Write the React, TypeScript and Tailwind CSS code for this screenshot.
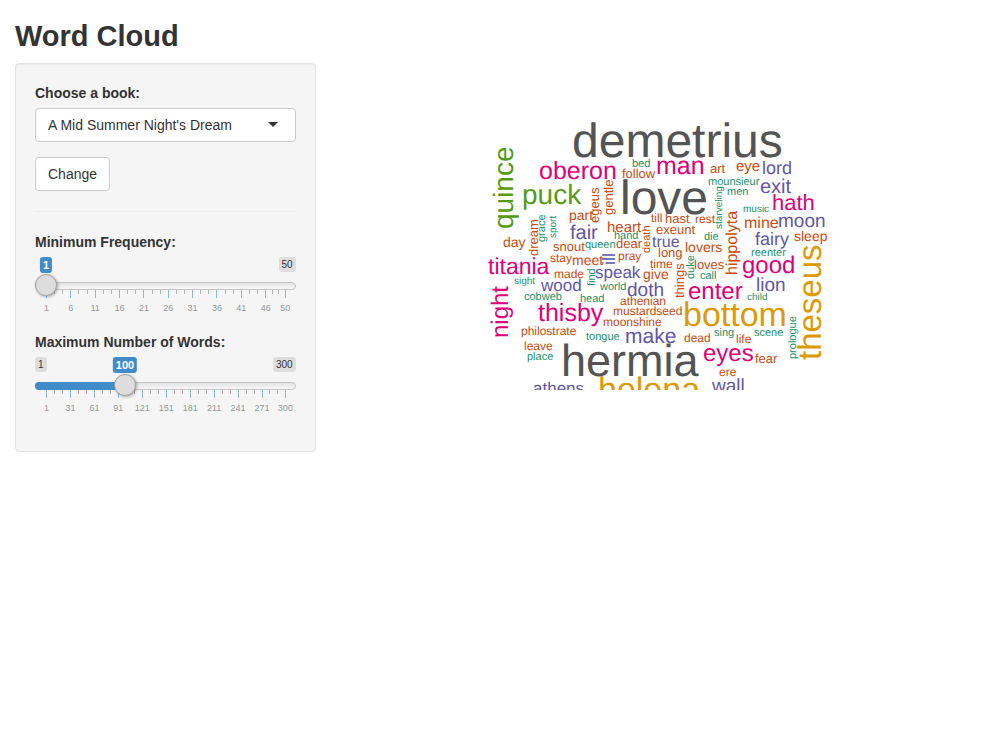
import { useId, useState } from "react";

type Word = [text: string, x: number, y: number, size: number, vertical?: boolean];

const TEAL: Word[] = [
  ["bed", 632, 167, 11],
  ["mounsieur", 708, 185, 11],
  ["men", 727, 195, 11],
  ["starveling", 722, 229, 10, true],
  ["music", 743, 212, 10],
  ["grace", 545, 242, 11, true],
  ["sport", 556, 238, 10, true],
  ["hand", 614, 239, 11],
  ["die", 704, 240, 11],
  ["queen", 585, 248, 11],
  ["reenter", 751, 256, 11],
  ["find", 595, 286, 11, true],
  ["duke", 694, 279, 11, true],
  ["call", 700, 279, 11],
  ["sight", 514, 284, 10],
  ["world", 600, 290, 11],
  ["cobweb", 524, 300, 11],
  ["head", 580, 302, 11],
  ["child", 747, 300, 10],
  ["tongue", 586, 340, 11],
  ["sing", 714, 336, 11],
  ["scene", 754, 336, 11],
  ["prologue", 796, 359, 11, true],
  ["place", 527, 360, 11],
];

const ORANGE: Word[] = [
  ["follow", 622, 178, 13],
  ["art", 710, 173, 13],
  ["eye", 736, 171, 15],
  ["egeus", 599, 223, 13, true],
  ["gentle", 613, 215, 13, true],
  ["part", 569, 220, 14],
  ["heart", 607, 232, 15],
  ["till", 651, 222, 12],
  ["hast", 665, 223, 13],
  ["rest", 695, 223, 12],
  ["mine", 744, 228, 16],
  ["day", 503, 247, 14],
  ["dream", 538, 256, 13, true],
  ["death", 650, 253, 11, true],
  ["exeunt", 656, 234, 13],
  ["hippolyta", 737, 275, 16, true],
  ["sleep", 794, 241, 14],
  ["snout", 553, 251, 13],
  ["dear", 616, 248, 13],
  ["lovers", 685, 252, 14],
  ["stay", 550, 262, 12],
  ["meet", 572, 265, 14],
  ["pray", 618, 260, 12],
  ["long", 658, 257, 13],
  ["made", 554, 278, 12],
  ["time", 650, 268, 12],
  ["give", 643, 279, 14],
  ["things", 684, 298, 13, true],
  ["loves", 694, 269, 13],
  ["athenian", 620, 305, 12],
  ["mustardseed", 613, 315, 12],
  ["moonshine", 603, 326, 12],
  ["philostrate", 521, 335, 12],
  ["leave", 524, 350, 12],
  ["dead", 684, 342, 12],
  ["life", 736, 343, 12],
  ["fear", 755, 363, 13],
  ["ere", 719, 376, 12],
];

const PURPLE: Word[] = [
  ["lord", 762, 174, 18],
  ["exit", 760, 193, 20],
  ["moon", 778, 227, 19],
  ["fair", 570, 239, 20],
  ["fairy", 755, 245, 18],
  ["true", 652, 247, 16],
  ["ill", 615, 265, 18, true],
  ["speak", 595, 278, 17],
  ["wood", 541, 291, 17],
  ["doth", 627, 296, 19],
  ["lion", 756, 291, 19],
  ["make", 625, 343, 21],
  ["athens", 533, 394, 17],
  ["wall", 712, 392, 19],
];

const PINK: Word[] = [
  ["oberon", 539, 179, 25],
  ["man", 656, 174, 25],
  ["hath", 772, 210, 22],
  ["titania", 488, 274, 23],
  ["good", 742, 273, 24],
  ["enter", 688, 299, 24],
  ["night", 508, 338, 24, true],
  ["thisby", 538, 321, 25],
  ["eyes", 703, 361, 24],
];

const GREEN: Word[] = [
  ["quince", 513, 229, 28, true],
  ["puck", 522, 204, 28],
];

const GOLD: Word[] = [
  ["bottom", 683, 326, 34],
  ["theseus", 821, 360, 33, true],
  ["helena", 598, 401, 34],
];

const GREY: Word[] = [
  ["demetrius", 572, 157, 48],
  ["love", 620, 214, 48],
  ["hermia", 561, 376, 45],
];

const GROUPS: { color: string; words: Word[] }[] = [
  { color: "#219068", words: TEAL },
  { color: "#c94b10", words: ORANGE },
  { color: "#6156a8", words: PURPLE },
  { color: "#e0007a", words: PINK },
  { color: "#559b15", words: GREEN },
  { color: "#dd9a08", words: GOLD },
  { color: "#545454", words: GREY },
];

function WordCloud() {
  return (
    <svg
      viewBox="478 63 366 327"
      role="img"
      aria-label="Word cloud"
      className="h-[327px] w-[366px] overflow-hidden [text-rendering:geometricPrecision]"
    >
      {GROUPS.map((group) => (
        <g key={group.color} fill={group.color}>
          {group.words.map(([text, x, y, size, vertical]) => (
            <text
              key={text}
              x={x}
              y={y}
              fontSize={size}
              transform={vertical ? `rotate(-90 ${x} ${y})` : undefined}
            >
              {text}
            </text>
          ))}
        </g>
      ))}
    </svg>
  );
}

type SliderProps = {
  label: string;
  min: number;
  max: number;
  step: number;
  initial: number;
  filled: boolean;
};

function Slider({ label, min, max, step, initial, filled }: SliderProps) {
  const id = useId();
  const [value, setValue] = useState(initial);
  const percent = (v: number) => ((v - min) / (max - min)) * 100;

  const stops: number[] = [];
  for (let v = min; v < max; v += step) stops.push(v);
  stops.push(max);

  const minors: number[] = [];
  stops.slice(0, -1).forEach((v, i) => {
    const gap = stops[i + 1] - v;
    minors.push(v + gap / 3, v + (gap * 2) / 3);
  });

  return (
    <div className="mb-[15px]">
      <label htmlFor={id} className="mb-[5px] block font-bold">
        {label}
      </label>
      <div className="h-[60px]">
        <div className="relative flex h-[17px] items-start justify-between text-[10px] leading-[13px]">
          <span className={value === min ? "invisible" : "rounded-[3px] bg-[#dddddd] px-[3px] py-px"}>
            {min}
          </span>
          <span className="rounded-[3px] bg-[#dddddd] px-[3px] py-px">{max}</span>
          <div className="absolute inset-x-[11px] top-0">
            <output
              htmlFor={id}
              className="absolute top-0 -translate-x-1/2 rounded-[3px] bg-[#428bca] px-[3px] py-px text-[11px] leading-[14px] font-bold text-white"
              style={{ left: `${percent(value)}%` }}
            >
              {value}
            </output>
          </div>
        </div>
        <div className="relative h-[22px]">
          <div className="absolute inset-x-0 top-2 h-2 overflow-hidden rounded-full border border-[#c4c4c4] bg-gradient-to-b from-[#e2e2e2] to-[#f8f8f8]" />
          {filled && (
            <div className="absolute inset-x-0 top-2 h-2 overflow-hidden rounded-full">
              <div className="h-full bg-[#428bca]" style={{ width: `${percent(value)}%` }} />
            </div>
          )}
          <input
            id={id}
            type="range"
            min={min}
            max={max}
            value={value}
            onChange={(e) => setValue(Number(e.target.value))}
            className="relative z-10 block h-[22px] w-full cursor-pointer appearance-none bg-transparent [&::-webkit-slider-thumb]:h-[22px] [&::-webkit-slider-thumb]:w-[22px] [&::-webkit-slider-thumb]:appearance-none [&::-webkit-slider-thumb]:rounded-full [&::-webkit-slider-thumb]:border [&::-webkit-slider-thumb]:border-[#a3a3a3] [&::-webkit-slider-thumb]:bg-[#dddddd] [&::-webkit-slider-thumb]:shadow-[1px_1px_3px_rgba(0,0,0,0.3)]"
          />
        </div>
        <div className="relative mx-[11px] -mt-[6px] h-[27px]">
          {minors.map((v) => (
            <span
              key={v}
              className="absolute top-0 h-1 w-px bg-[#b3b3b3]"
              style={{ left: `${percent(v)}%` }}
            />
          ))}
          {stops.map((v) => (
            <span
              key={v}
              className="absolute top-0 flex w-px flex-col items-center gap-1"
              style={{ left: `${percent(v)}%` }}
            >
              <span className="h-2 w-px shrink-0 bg-[#90b9dd]" />
              <span className="text-[9px] leading-3 text-[#949a9f]">{v}</span>
            </span>
          ))}
        </div>
      </div>
    </div>
  );
}

export default function App() {
  return (
    <div className="px-[15px] pt-5 font-['Liberation_Sans',Arial,sans-serif] text-sm leading-5 text-[#333333]">
      <h2 className="mb-[10px] text-[29px] leading-[33px] font-bold">Word Cloud</h2>
      <div className="-mx-[15px] flex items-start">
        <div className="w-1/3 px-[15px]">
          <form
            className="rounded border border-[#e3e3e3] bg-[#f5f5f5] p-[19px] shadow-[inset_0_1px_1px_rgba(0,0,0,0.05)]"
            onSubmit={(e) => e.preventDefault()}
          >
            <label htmlFor="book" className="mb-[5px] block font-bold">
              Choose a book:
            </label>
            <div className="relative mb-[15px]">
              <select
                id="book"
                className="block h-[34px] w-full appearance-none rounded border border-[#cccccc] bg-white pr-8 pl-3"
              >
                <option>A Mid Summer Night's Dream</option>
                <option>The Merchant of Venice</option>
                <option>Romeo and Juliet</option>
              </select>
              <svg
                viewBox="0 0 10 5"
                aria-hidden="true"
                className="pointer-events-none absolute top-[14px] right-[18px] h-[5px] w-[10px]"
              >
                <path d="M0 0h10L5 5z" fill="#333333" />
              </svg>
            </div>
            <button
              type="submit"
              className="block h-[34px] rounded border border-[#cccccc] bg-white px-3"
            >
              Change
            </button>
            <hr className="my-5 border-t border-[#eeeeee]" />
            <Slider label="Minimum Frequency:" min={1} max={50} step={5} initial={1} filled={false} />
            <Slider label="Maximum Number of Words:" min={1} max={300} step={30} initial={100} filled />
          </form>
        </div>
        <main className="flex w-2/3 justify-center px-[15px]">
          <WordCloud />
        </main>
      </div>
    </div>
  );
}
